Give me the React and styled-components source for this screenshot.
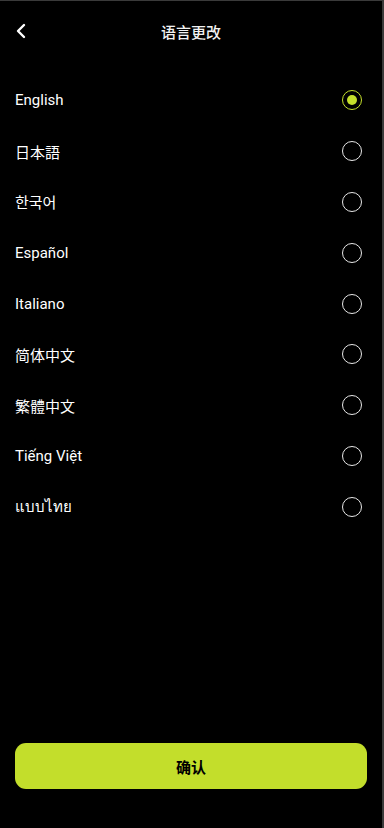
import React, { useState } from "react";
import styled, { createGlobalStyle } from "styled-components";

const Global = createGlobalStyle`
  html, body { margin: 0; padding: 0; background: #000; }
  body { font-family: Roboto, "Noto Sans", "Noto Sans CJK SC", sans-serif; }
  * { box-sizing: border-box; }
`;

const Screen = styled.div`
  width: 384px;
  height: 828px;
  background: #000;
  border-top: 1px solid #3a3a3a;
  border-right: 2px solid #3a3a3a;
  display: flex;
  flex-direction: column;
  color: #fff;
`;

const Header = styled.div`
  height: 60px;
  display: grid;
  grid-template-columns: 48px 1fr 48px;
  align-items: center;
`;

const BackBtn = styled.button`
  background: none;
  border: 0;
  padding: 0 0 0 14px;
  height: 40px;
  display: flex;
  align-items: center;
  color: #fff;
`;

const Title = styled.div`
  text-align: center;
  font-size: 15px;
  font-weight: 500;
  font-family: "Noto Sans CJK SC", sans-serif;
  color: #f2f2f2;
`;

const List = styled.div`
  padding-top: 14px;
  display: flex;
  flex-direction: column;
  flex: 1;
`;

const Row = styled.div`
  height: 50.8px;
  padding: 0 20px 0 15px;
  display: flex;
  align-items: center;
  justify-content: space-between;
  cursor: pointer;
`;

const Label = styled.span`
  font-size: 15px;
  font-weight: 400;
  color: #fff;
  font-family: Roboto, "Noto Sans", "Noto Sans CJK JP", "Noto Sans CJK KR", sans-serif;
`;

const Radio = styled.span`
  width: 20px;
  height: 20px;
  border-radius: 50%;
  border: 1.5px solid ${(p) => (p.$on ? "#c5e02c" : "#e8e8e8")};
  display: flex;
  align-items: center;
  justify-content: center;
  &::after {
    content: "";
    width: 10px;
    height: 10px;
    border-radius: 50%;
    background: #c5e02c;
    display: ${(p) => (p.$on ? "block" : "none")};
  }
`;

const Footer = styled.div`
  padding: 0 15px 39px 15px;
`;

const Confirm = styled.button`
  width: 100%;
  height: 46px;
  border: 0;
  border-radius: 11px;
  background: #c3de2b;
  color: #000;
  font-size: 15px;
  font-weight: 700;
  font-family: "Noto Sans CJK SC", sans-serif;
`;

const langs = [
  "English",
  "日本語",
  "한국어",
  "Español",
  "Italiano",
  "简体中文",
  "繁體中文",
  "Tiếng Việt",
  "แบบไทย",
];

export default function App() {
  const [sel, setSel] = useState(0);
  return (
    <>
      <Global />
      <Screen>
        <Header>
          <BackBtn aria-label="back">
            <svg width="14" height="16" viewBox="0 0 14 16" fill="none">
              <path d="M10 2 L4 8 L10 14" stroke="#fff" strokeWidth="2.4" strokeLinecap="round" strokeLinejoin="round" />
            </svg>
          </BackBtn>
          <Title>语言更改</Title>
          <span />
        </Header>
        <List>
          {langs.map((l, i) => (
            <Row key={l} onClick={() => setSel(i)}>
              <Label>{l}</Label>
              <Radio $on={sel === i} />
            </Row>
          ))}
        </List>
        <Footer>
          <Confirm>确认</Confirm>
        </Footer>
      </Screen>
    </>
  );
}
